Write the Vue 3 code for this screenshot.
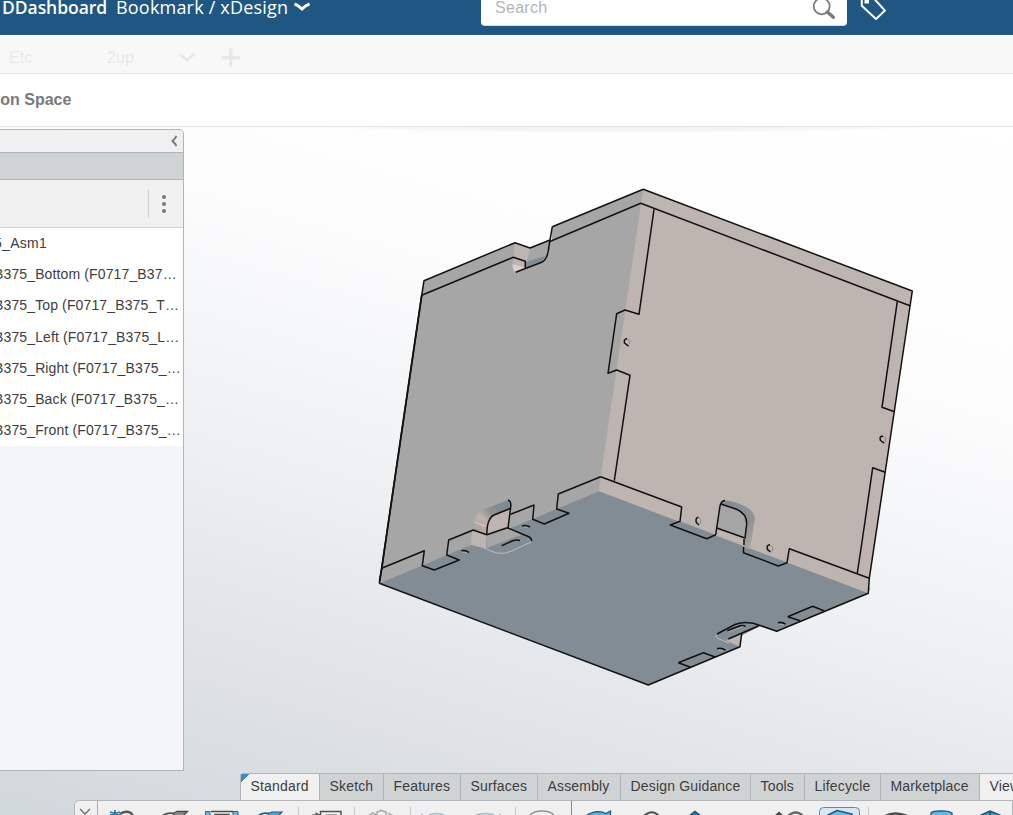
<script setup>
const parts = [
  '5_Asm1',
  'B375_Bottom (F0717_B37…',
  'B375_Top (F0717_B375_T…',
  'B375_Left (F0717_B375_L…',
  'B375_Right (F0717_B375_…',
  'B375_Back (F0717_B375_…',
  'B375_Front (F0717_B375_…'
]
const tabs = ['Standard', 'Sketch', 'Features', 'Surfaces', 'Assembly', 'Design Guidance', 'Tools', 'Lifecycle', 'Marketplace', 'View']
</script>

<template>
  <div class="page">
    <header class="topbar">
      <div class="title"><b>DDashboard</b><span>Bookmark / xDesign</span>
        <svg class="title-chev" width="18" height="12" viewBox="0 0 18 12"><path d="M1.5 3Q5 4 9 8Q13 4 16.5 3" fill="none" stroke="#fff" stroke-width="3" /></svg>
      </div>
      <div class="search">
        <span>Search</span>
        <svg width="26" height="22" viewBox="810 -2 26 22"><circle cx="821.7" cy="6.3" r="8" fill="none" stroke="#77797c" stroke-width="1.8" /><path d="M827.3 12L833.4 17.2" stroke="#77797c" stroke-width="3.4" stroke-linecap="round" /></svg>
      </div>
      <svg class="tag" width="30" height="24" viewBox="858 -2 30 24"><path d="M861.8 -3V5.8L876 18.9L885 10.6L872.5 -3" fill="none" stroke="#fff" stroke-width="2" stroke-linejoin="round" /><path d="M864.5 -2H869V3.5H864.5Z" fill="#fff" /></svg>
    </header>

    <nav class="dashtabs">
      <span class="etc">Etc</span><span class="two">2up</span>
      <svg width="20" height="20" viewBox="0 0 20 20"><path d="M2.5 6.5Q6 8 10 12Q14 8 17.5 6.5" fill="none" stroke="#e9e9e9" stroke-width="2.6" /></svg>
      <svg class="plus" width="20" height="20" viewBox="0 0 20 20"><path d="M9.7 .5V19M.5 9.7H19" stroke="#e9e9e9" stroke-width="3.4" /></svg>
    </nav>

    <div class="space"><span>mon Space</span></div>

    <main class="work">
      <svg class="scene" width="1013" height="688" viewBox="0 127 1013 688">
        <defs>
          <linearGradient id="bend" x1="0" y1="1" x2="1" y2="0"><stop offset="0" stop-color="#a99c96" /><stop offset=".35" stop-color="#c0b3ad" /><stop offset=".55" stop-color="#95918f" /><stop offset=".7" stop-color="#7f8b94" /></linearGradient>
          <linearGradient id="bend2" x1="0" y1="0" x2="1" y2="1"><stop offset="0" stop-color="#7e8b94" /><stop offset=".5" stop-color="#89939a" /><stop offset=".62" stop-color="#92918f" /><stop offset="1" stop-color="#adadad" /></linearGradient>
          <radialGradient id="shade" cx=".5" cy=".5" r=".5"><stop offset="0" stop-color="#000" stop-opacity=".055" /><stop offset=".8" stop-color="#000" stop-opacity=".03" /><stop offset="1" stop-color="#000" stop-opacity="0" /></radialGradient>
        </defs>
        <ellipse cx="625" cy="126" rx="310" ry="7" fill="url(#shade)" />

        <!-- faces -->
        <path class="grey" d="M379.5 583L381.7 568L421.7 295L424 280.7L515 242.7L530 248L551.7 240L552.3 226.7L643.3 189.3L645 203.5L604 477L603 495L599 492.3Z" />
        <path class="slate" d="M599 491.3L605 488L870 588L868.3 593.3L776.7 631.3L760.7 625.7L729 639L740 646.7L648.3 685L379.5 583Z" />
        <path class="slate" d="M760.7 625.7Q749 620 739 624L718 633Q714 636 719 639L729 642Z" />
        <path class="tan" d="M643.3 189.3L912.3 291L869.5 578L868.3 593.3L599 491.3L600.7 477L641 203.5Z" />

        <!-- notch on the upper left edge -->
        <path class="tan" d="M515 242.7L530 248L525.5 269L513 270L513.4 257Z" />
        <path fill="#d9d0cb" d="M512.4 264L525.3 267.5L515.5 272.6Q513 271 512.4 264Z" />
        <path class="slate" d="M525.5 262L545 256L541.7 262.3L525.5 268.5Z" />
        <!-- hand hole on the lower left -->
        <path fill="url(#bend)" d="M474 530L474.3 520Q476 513 485 509L508.5 500L510.7 508.3L494 515Q487.5 520 486.7 534.7Z" />
        <path d="M474.5 522L487.5 527" stroke="#dccfc8" stroke-width="1" />
        <path class="tan" d="M486.7 534.7Q487 518 494 515L510.3 508.3L508 527.7Z" />
        <path class="tan" d="M472 530.5L486.7 534.7L486 548.5L471 545Z" />
        <path class="grey" d="M486.7 534.7L507.5 528L522 534.5L486.7 548Z" />
        <!-- slots cut below the two strips of the right wall -->
        <path class="slate" d="M680 521.3L670.3 525L706.7 538.7L716 535Z" />
        <path class="slate" d="M743.5 547L743.3 552.7L778.3 566L788.3 563Z" />
        <!-- hand hole on the lower right -->
        <path fill="url(#bend2)" d="M720.7 505Q722 501 725 500.3Q735 502 740 504Q754 509 755 519L750 549.3L743.5 547L746.7 520Z" />
        <path class="grey" d="M720.7 504L736.7 509.3Q747 514 746.7 523L745 538L716.7 528Z" />
        <path class="tan" d="M741.7 633.3L740 646.7L726 640.5Z" />

        <!-- edges -->
        <g class="edge">
          <path d="M379.3 583.3L381.7 568.3L421.7 295.3L424 280.7L515 242.7L530 248L550 240" />
          <path d="M552.3 226.7L643.3 189.3L912.3 291L869.3 578.3L868.3 593.3L776.7 631.3L760.7 625.7Q747 620 735 624.5L717 634M741.7 633.3L740 646.7L648.3 685L379.3 583.3" />
          <path d="M421.7 295.3L513.3 257.3L525.3 261.3V268.3M515.7 272.3L541.7 262.3Q548 259 549 246L552.3 226.7" />
          <path d="M549 241.5L551.7 240.7L640.7 203.3L910 305.7" />
          <path d="M654 209.3L639 314.3L625 310L616.7 313.7L608 373.3L616.7 370L630 375.3L614.3 480.7" />
          <path d="M897.3 301.3L882 407.3L894.7 411.7M885.3 472.3L872.7 467.7L862.3 540L857.3 573" />
          <path d="M600.7 476.7L681.7 507L680 521.3L670.3 525L706.7 538.7L715.7 534.7L720 506Q721 501 725 500.5" />
          <path d="M720.7 504L736.7 509.3Q747 514 746.7 524L745 538L716.7 528M744 539V545M743.5 547V552.7L778.3 566L787 562.7L789.3 548.7L869.3 578.3" />
          <path d="M381.7 568.3L424.3 550.7L422.3 565.7L434.3 570L459.3 560L446.7 555L448.7 540L473.3 530L486.7 534.7L507.3 527.7L527 536Q532 538 531.7 541" />
          <path d="M486.7 534.7L487.3 526.7Q489 517 494 515L510.7 508.3M508 500Q511.5 501 510.7 507L508 528" />
          <path d="M510.7 514.3L534 505L532.7 519.3L544.3 524L569 513.3L556.7 509L558.3 494L600.7 476.7" />
          <path d="M787.7 616.7L812.7 606.3L824.3 611M787.7 616.7L800 620.7M678.3 662.7L703.3 652.7L716 657.3M678.3 662.7L690.7 667.3" />
          <path d="M728.3 639L758.3 626M727.3 630.7L740 625.8Q744 625 745.5 626.5" />
          <path d="M501.7 545.7L513.3 540.5Q517 539.5 520 540.5" />
          <path d="M461.5 550.8Q465 549.5 469 552.5M522 526Q526 524.5 530 527M778 622.8Q782 621.5 785.5 624.2M717 648.8Q721 647.5 725.5 650" />
        </g>
        <path d="M379.6 581L381.7 568.3L421.7 295.3" fill="none" stroke="#111" stroke-width="1.8" />
        <g fill="none" stroke="#c5bdb8" stroke-width="1">
          <path d="M483.3 547.3Q489 551 498 553.2Q505 554 511 551.3L531 542M716 635Q715 638 719 639L729 643" />
          <path d="M462 552.3L467 552.8M523 527.3L528 527.8M779 624.3L784 624.8M718 650.3L723 650.8M728.5 631.8L743.5 626.8" stroke="#aaa6a4" />
          <path d="M627 338.8Q631 340 629.4 344M883 436.3Q887 437 885.4 442M698.4 517.5Q702 518.5 700.2 523.5M770 545Q774 546 772.2 551" stroke="#8e8884" />
        </g>
        <path class="edge" d="M627 338.8Q623.5 339 624.5 343L628.5 346.2M883 436.2Q879 436 880.5 440.5L884.2 443.2M698.4 517.3Q695 518 696.4 522.5L699 525M770 544.8Q766 545 767.6 549.6L770.5 552" />
      </svg>

      <aside class="panel">
        <div class="p-head"><svg width="10" height="14" viewBox="0 0 10 14"><path d="M7.5 2Q6.5 4 3.5 7Q6.5 10 7.5 12" fill="none" stroke="#77797c" stroke-width="1.8" /></svg></div>
        <div class="p-sel"></div>
        <div class="p-tools"><i class="rule"></i><span class="dots"><i></i><i></i><i></i></span></div>
        <ul class="tree"><li v-for="p in parts" :key="p">{{ p }}</li></ul>
      </aside>

      <div class="actionbar">
        <div class="tabs"><div v-for="(t, i) in tabs" :key="t" class="tab" :class="{ on: i === 0 || i === 9 }">{{ t }}</div></div>
        <div class="tools">
          <svg width="938" height="14" viewBox="75 801 938 14" fill="none">
            <path d="M97.5 801V815" stroke="#aaadaf" /><path d="M571.5 801V815" stroke="#85878a" />
            <path d="M298.5 807V815M354.5 807V815M410.5 807V815M515.5 807V815M868.5 807V815" stroke="#c5c7c9" />
            <path d="M80 809L85 814L90 809" stroke="#66686b" stroke-width="1.3" />
            <path d="M115 810V815M110 812L120 815M120 812L110 815" stroke="#2d7da8" stroke-width="1.8" />
            <path d="M120 814Q125 810 131 813L133 816" stroke="#555759" stroke-width="2.4" />
            <path d="M162 816Q168 811.5 175 814" stroke="#4a4c4e" stroke-width="1.8" /><path d="M173 813.5L177 811.5H187.5L183 816H175Z" fill="#8a8c8e" stroke="#4a4c4e" stroke-width="1.3" />
            <path d="M205.5 816V811.5H210V816M233 816V811.5H238V816" fill="#69b6dd" stroke="#276c96" /><path d="M211 811.5H233M215 816V814.5H229V816" stroke="#4a4c4e" stroke-width="1.6" />
            <path d="M258 816Q263 811.5 270 814" stroke="#225a80" stroke-width="1.8" /><path d="M268 813.5L272 812H282L278 816H269Z" fill="#4ba4d2" stroke="#225a80" stroke-width="1.2" />
            <path d="M320.5 816V811.5H341V816M326 815.2H337" stroke="#505255" stroke-width="1.5" /><path d="M312.5 814.8H320M315.5 812.8L319 815" stroke="#505255" stroke-width="1.3" />
            <path d="M377 816V812L381 810.5L386 812V816M369 815L373 813L376 815M388 813L393 816" stroke="#aeb0b2" stroke-width="1.8" />
            <path d="M422 814V816M429 815Q437 812 444 815M476 815Q486 812 494 815M500 814V816" stroke="#a0b9c8" stroke-width="1.7" />
            <path d="M530 815Q534 811 542 811Q550 811 554 815" stroke="#919395" stroke-width="1.6" />
            <path d="M586 816Q591 812 598 811.7Q603 811.7 606 813.5L610.5 811V816Z" fill="#5cb5df" stroke="#1d5b80" stroke-width="1.3" />
            <path d="M644 816Q652 808.5 659 816" stroke="#505255" stroke-width="2" />
            <path d="M689 816L695 811.5L701 816" fill="#2a78a5" stroke="#225579" stroke-width="1.5" />
            <path d="M774 816L779 811.5L784 816Z" fill="#454749" /><path d="M788 816Q796 809 803 816" stroke="#66686a" stroke-width="2.2" />
            <rect x="819.5" y="807.5" width="40" height="18" rx="4" fill="#d6e8f4" stroke="#4b91bd" /><path d="M828 815L837 810.5L852 814V816H828Z" fill="#69bce3" stroke="#1d567b" stroke-width="1.5" />
            <path d="M885 816Q895 811 907 816" stroke="#484a4c" stroke-width="2.5" />
            <path d="M931 816V813Q933 810.8 941 810.8Q950 811 952 813V816Z" fill="#68b9e2" stroke="#1c577d" stroke-width="1.3" />
            <path d="M979 816L990 811L1002 816Z" fill="#4299c6" stroke="#174f74" stroke-width="1.4" /><path d="M990 811V816" stroke="#174f74" stroke-width="1.5" />
          </svg>
        </div>
      </div>
    </main>
  </div>
</template>

<style>
body { margin: 0; overflow: hidden; }
</style>
<style scoped>
.page { width: 1013px; height: 815px; overflow: hidden; display: flex; flex-direction: column; font-family: "Liberation Sans", Arial, sans-serif; background: #fff; }
.topbar { height: 35px; flex: none; background: #1f5682; display: flex; align-items: flex-start; }
.title { width: 481px; flex: none; display: flex; color: #fff; font-family: "Open Sans", "Noto Sans", sans-serif; font-size: 18px; line-height: 26px; margin-top: -6px; white-space: nowrap; }
.title b { width: 116px; padding-left: 2px; box-sizing: border-box; flex: none; font-size: 17.5px; font-weight: 600; letter-spacing: -0.05px; }
.title span { width: 177px; flex: none; letter-spacing: .2px; }
.title-chev { margin-top: 7px; }
.search { width: 366px; height: 26px; box-sizing: border-box; background: #fff; border-bottom: 1px solid #d7dce1; border-radius: 0 0 4px 4px; display: flex; justify-content: space-between; padding: 0 11px 0 14px; color: #b1b6ba; font-size: 16px; }
.search span { line-height: 18px; margin-top: -1px; letter-spacing: .3px; }
.search svg { margin-top: -2px; }
.tag { margin: -2px 0 0 11px; }
.dashtabs { height: 38px; flex: none; background: #f8f8f8; border-bottom: 1px solid #e1e1e1; display: flex; align-items: center; color: #e9e9e9; font-size: 16px; }
.dashtabs span { margin-top: 7px; letter-spacing: .2px; }
.dashtabs svg { margin-top: 7px; }
.etc { width: 98px; padding-left: 9px; }
.two { width: 70px; }
.dashtabs .plus { margin-left: 24px; }
.space { height: 52px; flex: none; border-bottom: 1px solid #e3e4e4; line-height: 52px; color: #77797c; font-size: 16px; font-weight: bold; }
.space span { display: block; margin-left: -14px; }
.work { flex: 1; min-height: 0; position: relative; background: linear-gradient(196deg, #fff 0%, #fdfdfe 28%, #edeff1 57%, #dee2e5 80%, #d1d8db 100%); }
.scene { display: block; }
.grey { fill: #a6a6a6; }
.tan { fill: #beb5b0; }
.slate { fill: #828c94; }
.edge { fill: none; stroke: #111; stroke-width: 1.5; stroke-linejoin: round; }
.panel { position: absolute; left: 0; top: 2px; width: 184px; height: 642px; box-sizing: border-box; background: #f3f5f8; border: 1px solid #b1b5b9; border-left: 0; border-top-right-radius: 5px; overflow: hidden; }
.p-head { height: 22px; background: #f0f0f0; border-bottom: 1px solid #b1b5b9; display: flex; justify-content: flex-end; align-items: center; padding-right: 4px; }
.p-sel { height: 26px; background: #cfd3d4; border-bottom: 1px solid #b1b5b9; }
.p-tools { height: 47px; background: #f0f0f0; border-bottom: 1px solid #d0d2d4; display: flex; align-items: center; justify-content: flex-end; }
.rule { width: 1px; height: 29px; background: #cfd2d4; }
.dots { width: 34px; display: flex; flex-direction: column; gap: 3px; box-sizing: border-box; padding-left: 13px; }
.dots i { width: 4px; height: 4px; border-radius: 50%; background: #77797c; }
.tree { list-style: none; margin: 0; padding: 0; background: #fff; color: #3d3d3d; font-size: 14px; letter-spacing: .13px; }
.tree li { height: 31.2px; line-height: 31.2px; white-space: nowrap; margin-left: -6px; }
.tree li:first-child { letter-spacing: .3px; }
.actionbar { position: absolute; left: 75px; right: 0; top: 646px; }
.tabs { margin-left: 165px; display: grid; grid-template-columns: 79px 64px 77px 77px 83px 130px 54px 76px 99px 34px; height: 27px; overflow: hidden; border-top-left-radius: 4px; }
.tab { box-sizing: border-box; border: 1px solid #b1b5b9; border-width: 1px 0 0 1px; background: #cfd3d4; color: #3d3d3d; font-size: 14px; line-height: 24px; padding-left: 9.5px; letter-spacing: .17px; white-space: nowrap; overflow: hidden; }
.tab.on { background: #f0f0f0; }
.tab:first-child { background: linear-gradient(135deg, #438ac2 6px, #f0f0f0 6px); }
.tools { height: 20px; margin-left: -1px; background: #f0f0f0; border: 1px solid #b1b5b9; border-top-left-radius: 5px; }
.tools svg { display: block; }
</style>
